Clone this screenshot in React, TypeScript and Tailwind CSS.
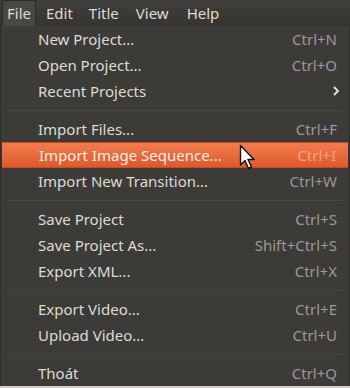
import React from "react";

type Item = { label: string; shortcut?: string; arrow?: boolean; active?: boolean } | "sep";

const items: Item[] = [
  { label: "New Project...", shortcut: "Ctrl+N" },
  { label: "Open Project...", shortcut: "Ctrl+O" },
  { label: "Recent Projects", arrow: true },
  "sep",
  { label: "Import Files...", shortcut: "Ctrl+F" },
  { label: "Import Image Sequence...", shortcut: "Ctrl+I", active: true },
  { label: "Import New Transition...", shortcut: "Ctrl+W" },
  "sep",
  { label: "Save Project", shortcut: "Ctrl+S" },
  { label: "Save Project As...", shortcut: "Shift+Ctrl+S" },
  { label: "Export XML...", shortcut: "Ctrl+X" },
  "sep",
  { label: "Export Video...", shortcut: "Ctrl+E" },
  { label: "Upload Video...", shortcut: "Ctrl+U" },
  "sep",
  { label: "Thoát", shortcut: "Ctrl+Q" },
];

export default function App() {
  return (
    <div
      className="w-[350px] h-[388px] bg-[#3c3b37] overflow-hidden flex flex-col relative"
      style={{ fontFamily: '"Noto Sans", "Open Sans", sans-serif' }}
    >
      <div className="h-[27px] flex items-stretch bg-gradient-to-b from-[#3f3e3a] to-[#35342f] text-[15px] text-[#dfdbd2]">
        <div className="ml-[2px] mr-[2px] px-[4px] flex items-center bg-[#4a4843] border border-[#2b2a27] border-b-0 rounded-t-[2px]">File</div>
        <div className="px-[8px] flex items-center">Edit</div>
        <div className="px-[8px] flex items-center">Title</div>
        <div className="px-[9px] flex items-center">View</div>
        <div className="px-[9px] flex items-center">Help</div>
      </div>
      <div className="flex-1 flex flex-col bg-[#3c3b37] border-l border-r border-[#2e2d2a] text-[15px]">
        {items.map((it, i) =>
          it === "sep" ? (
            <div key={i} className="h-[12px] flex items-center px-[6px]">
              <div className="flex-1 h-[1px] bg-[#2f2e2b] border-b border-[#46453f]" />
            </div>
          ) : (
            <div
              key={i}
              className={
                "h-[26px] flex items-center pl-[37px] pr-[12px] " +
                (it.active
                  ? "bg-gradient-to-b from-[#f27c4f] to-[#e0582a] text-[#fbeee6] mx-[1px] border-y border-[#c94a1f]"
                  : "text-[#dfdbd2]")
              }
            >
              <span className="flex-1">{it.label}</span>
              {it.shortcut && (
                <span className={it.active ? "text-[#f6a583]" : "text-[#9d9a94]"}>{it.shortcut}</span>
              )}
              {it.arrow && (
                <svg width="10" height="12" viewBox="0 0 10 12" className="mr-[-4px]">
                  <path d="M3 2 L7 6 L3 10" stroke="#e8e5df" strokeWidth="1.8" fill="none" />
                </svg>
              )}
            </div>
          )
        )}
      </div>
      <div className="h-[2px] bg-[#cfccc6]" />
      <svg
        className="absolute left-[239px] top-[144px]"
        width="20"
        height="28"
        viewBox="0 0 20 28"
      >
        <path
          d="M1.5 1.5 L1.5 21 L6 16.5 L9.5 24.5 L12.5 23 L9 15.5 L15 15.5 Z"
          fill="#ffffff"
          stroke="#111111"
          strokeWidth="1.4"
          strokeLinejoin="round"
        />
      </svg>
    </div>
  );
}
